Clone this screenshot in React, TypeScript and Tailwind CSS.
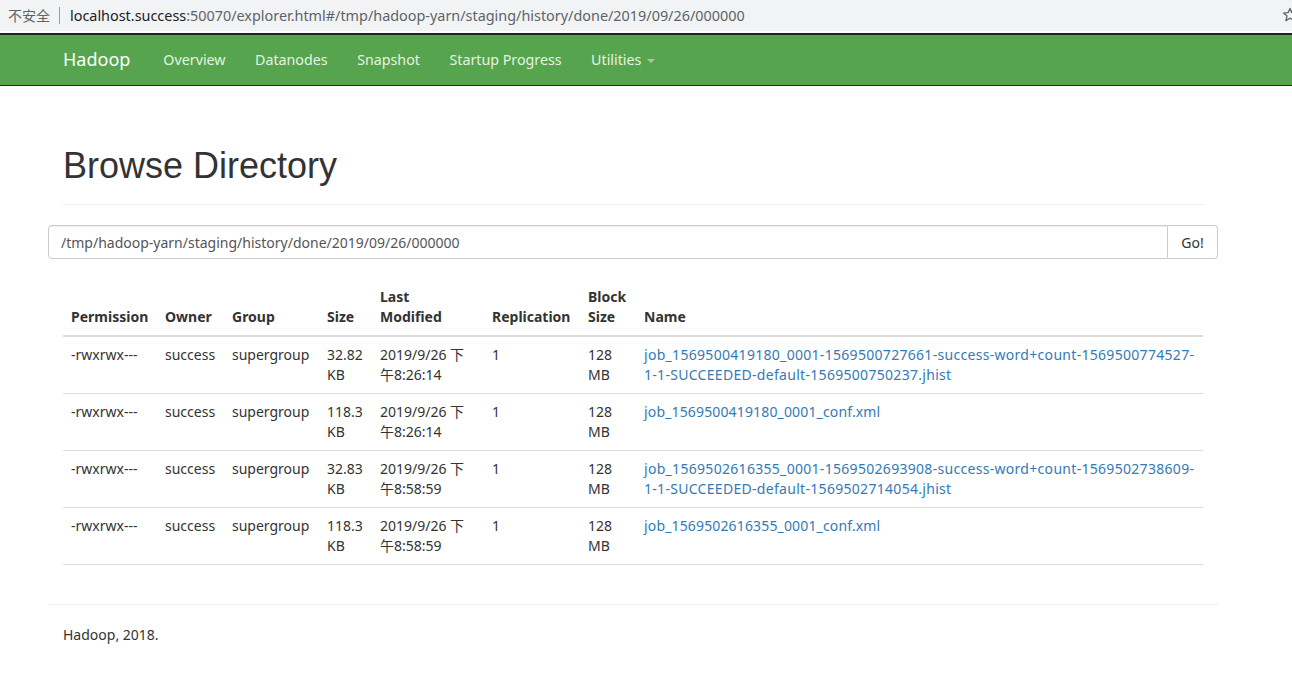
import React from "react";

const rows = [
  {
    size: ["32.82", "KB"],
    mod: ["2019/9/26 下", "午8:26:14"],
    name: ["job_1569500419180_0001-1569500727661-success-word+count-1569500774527-", "1-1-SUCCEEDED-default-1569500750237.jhist"],
  },
  { size: ["118.3", "KB"], mod: ["2019/9/26 下", "午8:26:14"], name: ["job_1569500419180_0001_conf.xml"] },
  {
    size: ["32.83", "KB"],
    mod: ["2019/9/26 下", "午8:58:59"],
    name: ["job_1569502616355_0001-1569502693908-success-word+count-1569502738609-", "1-1-SUCCEEDED-default-1569502714054.jhist"],
  },
  { size: ["118.3", "KB"], mod: ["2019/9/26 下", "午8:58:59"], name: ["job_1569502616355_0001_conf.xml"] },
];

const font = { fontFamily: '"Noto Sans", "Noto Sans CJK SC", sans-serif' };

export default function App() {
  return (
    <div className="w-[1292px] min-h-[675px] bg-white text-[#333]" style={font}>
      {/* browser chrome */}
      <div className="h-[31px] bg-[#f1f3f4] flex items-center text-[14.4px] relative">
        <span className="ml-[8px] text-[#5f6368] text-[14px]" style={{ fontFamily: '"Noto Sans CJK SC", sans-serif' }}>不安全</span>
        <span className="mx-[9px] w-px h-[17px] bg-[#9aa0a6]" />
        <span className="ml-[1px] text-[#202124]">localhost.success</span>
        <span className="text-[#5f6368]">:50070/explorer.html#/tmp/hadoop-yarn/staging/history/done/2019/09/26/000000</span>
        <svg className="absolute left-[1282px] top-[7px]" width="16" height="16" viewBox="0 0 16 16">
          <path d="M8 1.5l1.9 4.2 4.6.4-3.5 3 1.1 4.5L8 11.2l-4.1 2.4 1.1-4.5-3.5-3 4.6-.4z" fill="none" stroke="#5f6368" strokeWidth="1.3" strokeLinejoin="round" />
        </svg>
      </div>
      <div className="h-[2px] bg-white" />
      <div className="h-[2px] bg-[#222]" />
      {/* navbar */}
      <div className="h-[51px] bg-[#57a44e] border-b border-[#1d2b1a] flex items-center">
        <div className="ml-[63px] text-white text-[18px] -mt-[1px]">Hadoop</div>
        <div className="flex items-center text-[14.25px] text-[#e6f2e4] ml-[33px] gap-[29.5px] -mt-[1px]">
          <span>Overview</span>
          <span>Datanodes</span>
          <span>Snapshot</span>
          <span>Startup Progress</span>
          <span className="flex items-center">
            Utilities
            <span className="ml-[6px] inline-block w-0 h-0 border-l-[4px] border-r-[4px] border-t-[4px] border-l-transparent border-r-transparent border-t-[#a9c9a4] mt-[2px]" />
          </span>
        </div>
      </div>

      {/* content */}
      <div className="ml-[48px] w-[1170px]">
        <div className="px-[15px]">
          <div className="pt-[60px] pb-[18px] border-b border-[#eee]">
            <h1 className="text-[36px] leading-[40px] text-[#333]" style={{ fontFamily: '"Liberation Sans", Arial, sans-serif' }}>Browse Directory</h1>
          </div>
        </div>
        <div className="mt-[20px] flex h-[34px]">
          <div className="flex-1 border border-[#ccc] rounded-l-[4px] flex items-center px-[12px] text-[14px] text-[#555] shadow-[inset_0_1px_1px_rgba(0,0,0,0.075)]">
            /tmp/hadoop-yarn/staging/history/done/2019/09/26/000000
          </div>
          <div className="w-[50px] border border-l-0 border-[#ccc] rounded-r-[4px] flex items-center justify-center text-[14px] text-[#333]">Go!</div>
        </div>
        <div className="px-[15px] mt-[20px]">
          <table className="w-[1140px] text-[14px] leading-[20px] border-collapse">
            <thead>
              <tr className="border-b-2 border-[#ddd] text-left align-bottom">
                <th className="p-[8px] w-[94px] font-bold">Permission</th>
                <th className="p-[8px] w-[67px] font-bold">Owner</th>
                <th className="p-[8px] w-[95px] font-bold">Group</th>
                <th className="p-[8px] w-[53px] font-bold">Size</th>
                <th className="p-[8px] w-[112px] font-bold">Last<br />Modified</th>
                <th className="p-[8px] w-[96px] font-bold">Replication</th>
                <th className="p-[8px] w-[56px] font-bold">Block<br />Size</th>
                <th className="p-[8px] font-bold">Name</th>
              </tr>
            </thead>
            <tbody>
              {rows.map((r, i) => (
                <tr key={i} className="border-b border-[#ddd] align-top">
                  <td className="p-[8px]">-rwxrwx---</td>
                  <td className="p-[8px]">success</td>
                  <td className="p-[8px]">supergroup</td>
                  <td className="p-[8px]">{r.size[0]}<br />{r.size[1]}</td>
                  <td className="p-[8px]">{r.mod[0]}<br />{r.mod[1]}</td>
                  <td className="p-[8px]">1</td>
                  <td className="p-[8px]">128<br />MB</td>
                  {r.name.length > 1 ? (
                    <td className="p-[8px] text-[#337ab7] whitespace-nowrap tracking-[0.3px]">
                      {r.name[0]}
                      <br />
                      {r.name[1]}
                    </td>
                  ) : (
                    <td className="p-[8px] text-[#337ab7] whitespace-nowrap tracking-[0.15px]">
                      {r.name[0]}
                      <br />
                      &nbsp;
                    </td>
                  )}
                </tr>
              ))}
            </tbody>
          </table>
        </div>
        <div className="mt-[39px] border-t border-[#eee]" />
        <div className="px-[15px] pt-[19px] text-[14px]">Hadoop, 2018.</div>
      </div>
    </div>
  );
}
